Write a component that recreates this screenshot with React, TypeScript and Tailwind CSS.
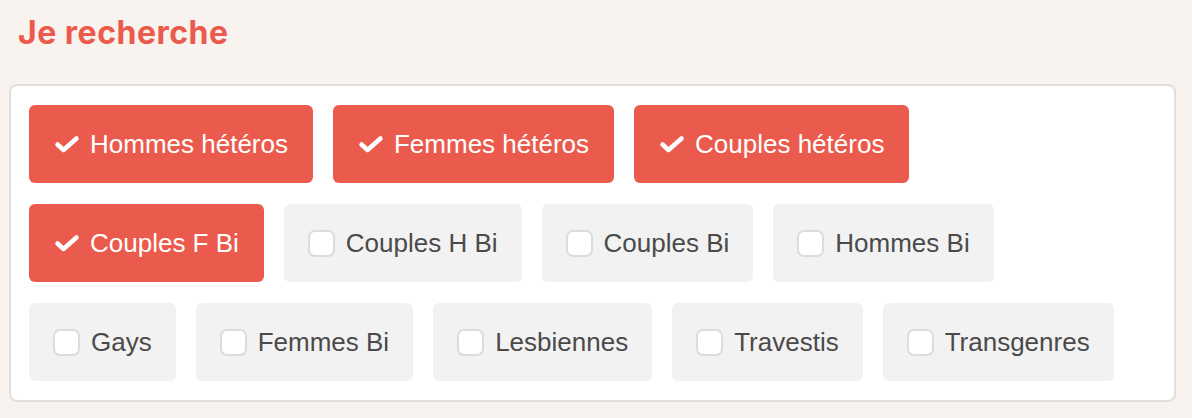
import React from "react";

type Option = { label: string; checked: boolean };

const rows: Option[][] = [
  [
    { label: "Hommes hétéros", checked: true },
    { label: "Femmes hétéros", checked: true },
    { label: "Couples hétéros", checked: true },
  ],
  [
    { label: "Couples F Bi", checked: true },
    { label: "Couples H Bi", checked: false },
    { label: "Couples Bi", checked: false },
    { label: "Hommes Bi", checked: false },
  ],
  [
    { label: "Gays", checked: false },
    { label: "Femmes Bi", checked: false },
    { label: "Lesbiennes", checked: false },
    { label: "Travestis", checked: false },
    { label: "Transgenres", checked: false },
  ],
];

function CheckMark() {
  return (
    <svg width="27" height="20" viewBox="0 0 27 20" fill="none">
      <path
        d="M3.5 10.5 L9.5 16 L22.5 4.5"
        stroke="white"
        strokeWidth={4.5}
        strokeLinecap="round"
        strokeLinejoin="round"
      />
    </svg>
  );
}

function Choice({ label, checked }: Option) {
  return (
    <button
      className={
        checked
          ? "flex h-[78px] items-center gap-[9px] rounded-[6px] bg-[#eb5b4d] px-[25px] text-white"
          : "flex h-[78px] items-center gap-[11px] rounded-[6px] bg-[#f2f2f2] px-[24px] text-[#4a4a4a]"
      }
    >
      {checked ? (
        <CheckMark />
      ) : (
        <span className="block h-[27px] w-[27px] rounded-[7px] border-2 border-[#dcdcdc] bg-white" />
      )}
      <span className="text-[26px] leading-none">{label}</span>
    </button>
  );
}

export default function App() {
  return (
    <div className="h-[418px] w-full bg-[#f8f3ee] pt-[12px] font-['Liberation_Sans',Arial,sans-serif]">
      <h1 className="pl-[18px] font-['Inter',sans-serif] text-[32px] font-bold leading-[42px] tracking-[0.5px] text-[#eb5b4d]">
        Je recherche
      </h1>

      <div className="ml-[9px] mt-[30px] w-[1167px] rounded-[8px] border-2 border-[#e2dfdb] bg-white px-[18px] py-[19px]">
        <div className="flex flex-col gap-[21px]">
          {rows.map((row, i) => (
            <div key={i} className="flex gap-[20px]">
              {row.map((o) => (
                <Choice key={o.label} {...o} />
              ))}
            </div>
          ))}
        </div>
      </div>
    </div>
  );
}
